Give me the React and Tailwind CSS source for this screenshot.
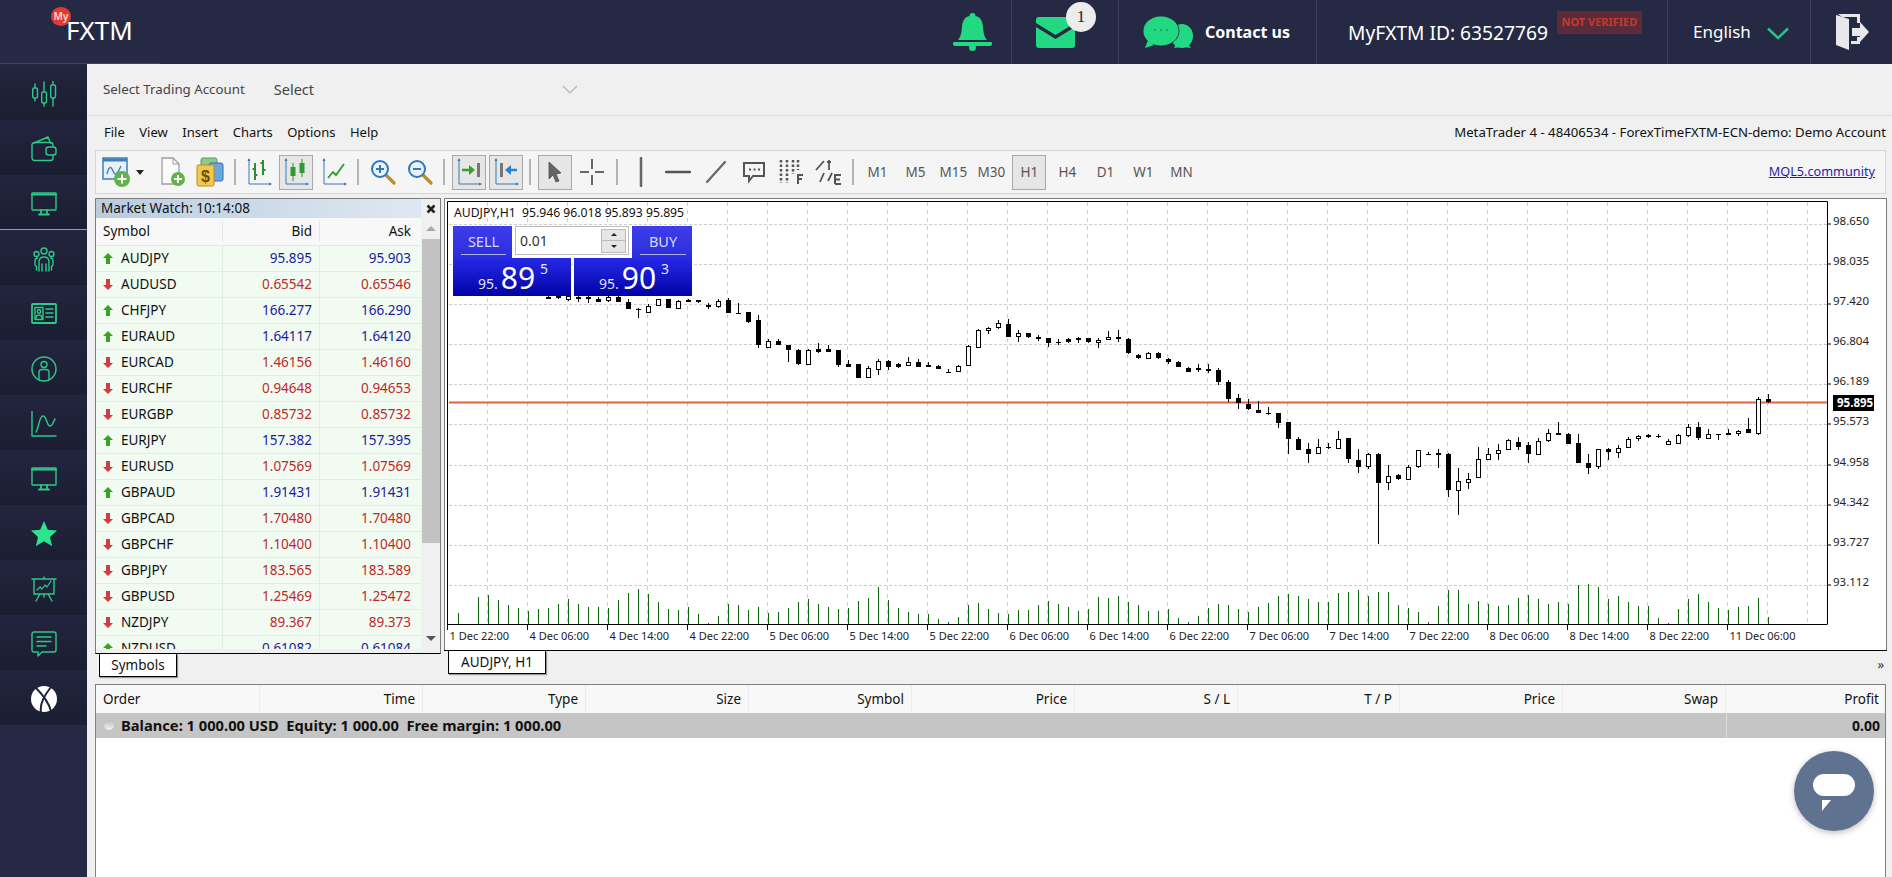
const quotes = [
  ['AUDJPY', '95.895', '95.903', 1],
  ['AUDUSD', '0.65542', '0.65546', 0],
  ['CHFJPY', '166.277', '166.290', 1],
  ['EURAUD', '1.64117', '1.64120', 1],
  ['EURCAD', '1.46156', '1.46160', 0],
  ['EURCHF', '0.94648', '0.94653', 0],
  ['EURGBP', '0.85732', '0.85732', 0],
  ['EURJPY', '157.382', '157.395', 1],
  ['EURUSD', '1.07569', '1.07569', 0],
  ['GBPAUD', '1.91431', '1.91431', 1],
  ['GBPCAD', '1.70480', '1.70480', 0],
  ['GBPCHF', '1.10400', '1.10400', 0],
  ['GBPJPY', '183.565', '183.589', 0],
  ['GBPUSD', '1.25469', '1.25472', 0],
  ['NZDJPY', '89.367', '89.373', 0],
  ['NZDUSD', '0.61082', '0.61084', 1],
]

const columns = ['Order', 'Time', 'Type', 'Size', 'Symbol', 'Price', 'S / L', 'T / P', 'Price', 'Swap', 'Profit']
const periods = ['M1', 'M5', 'M15', 'M30', 'H1', 'H4', 'D1', 'W1', 'MN']

// [index, wick top, wick bottom, body top, body bottom, hollow] y values are relative, see py()
const candles = [
  [10, 60, 85, 80, 84, 0], [11, 60, 88, 78, 84, 0], [12, 60, 92, 78, 88, 1], [13, 60, 97, 80, 85, 0],
  [14, 70, 100, 80, 88, 0], [15, 80, 95, 88, 95, 0], [16, 75, 95, 82, 90, 1], [17, 75, 95, 80, 95, 0],
  [18, 88, 117, 95, 117, 0], [19, 115, 145, 117, 117, 0], [20, 103, 128, 107, 125, 1], [21, 86, 106, 88, 104, 1],
  [22, 86, 113, 88, 113, 0], [23, 90, 114, 92, 113, 1], [24, 87, 97, 90, 95, 0], [25, 90, 100, 90, 97, 0],
  [26, 100, 118, 105, 108, 0], [27, 88, 115, 92, 109, 1], [28, 85, 130, 90, 128, 0], [29, 100, 130, 128, 128, 0],
  [30, 127, 158, 127, 155, 0], [31, 135, 235, 150, 224, 0], [32, 208, 233, 212, 230, 1], [33, 208, 226, 212, 224, 0],
  [34, 224, 275, 224, 240, 0], [35, 238, 285, 240, 282, 0], [36, 238, 283, 240, 281, 1], [37, 220, 248, 237, 245, 0],
  [38, 225, 245, 238, 245, 0], [39, 240, 292, 240, 285, 0], [40, 270, 292, 283, 290, 0], [41, 281, 323, 283, 323, 0],
  [42, 287, 322, 293, 322, 1], [43, 268, 315, 272, 296, 1], [44, 270, 300, 272, 290, 0], [45, 280, 293, 283, 290, 0],
  [46, 260, 285, 277, 284, 1], [47, 267, 291, 277, 290, 0], [48, 275, 290, 286, 289, 0], [49, 285, 298, 287, 297, 0],
  [50, 298, 308, 306, 306, 0], [51, 285, 307, 288, 304, 1], [52, 226, 286, 227, 284, 1], [53, 178, 235, 181, 230, 1],
  [54, 172, 192, 173, 178, 1], [55, 150, 178, 160, 170, 1], [56, 148, 201, 162, 200, 0], [57, 180, 215, 190, 199, 1],
  [58, 190, 205, 190, 200, 0], [59, 195, 212, 202, 205, 0], [60, 205, 230, 205, 218, 0], [61, 208, 224, 216, 216, 0],
  [62, 205, 218, 208, 215, 0], [63, 200, 220, 205, 208, 0], [64, 203, 219, 205, 217, 0], [65, 205, 233, 209, 217, 1],
  [66, 182, 210, 202, 208, 1], [67, 180, 216, 202, 206, 0], [68, 205, 252, 208, 250, 0], [69, 252, 268, 255, 265, 0],
  [70, 245, 266, 248, 264, 1], [71, 245, 267, 250, 265, 0], [72, 265, 282, 268, 275, 0], [73, 273, 291, 275, 290, 0],
  [74, 292, 306, 294, 305, 0], [75, 282, 306, 295, 299, 0], [76, 283, 310, 298, 304, 0], [77, 295, 345, 300, 335, 0],
  [78, 330, 395, 337, 386, 0], [79, 372, 417, 385, 400, 0], [80, 388, 420, 403, 418, 0], [81, 392, 430, 421, 428, 0],
  [82, 410, 435, 428, 428, 0], [83, 428, 473, 428, 458, 0], [84, 456, 552, 456, 506, 0], [85, 502, 540, 508, 539, 0],
  [86, 520, 578, 538, 551, 0], [87, 507, 552, 532, 550, 1], [88, 520, 538, 532, 532, 0], [89, 482, 536, 506, 535, 1],
  [90, 505, 580, 505, 568, 0], [91, 537, 608, 570, 590, 0], [92, 548, 596, 553, 589, 1], [93, 550, 822, 552, 638, 0],
  [94, 585, 660, 618, 635, 1], [95, 612, 630, 616, 626, 0], [96, 585, 630, 592, 626, 1], [97, 539, 593, 541, 589, 1],
  [98, 545, 555, 552, 552, 0], [99, 537, 595, 550, 553, 0], [100, 550, 680, 552, 660, 0], [101, 595, 735, 632, 659, 1],
  [102, 610, 657, 626, 635, 1], [103, 530, 624, 566, 622, 1], [104, 535, 568, 553, 566, 1], [105, 522, 570, 539, 550, 1],
  [106, 507, 538, 511, 536, 1], [107, 502, 540, 517, 530, 0], [108, 515, 578, 525, 551, 0], [109, 503, 552, 512, 551, 1],
  [110, 478, 515, 490, 509, 1], [111, 456, 495, 490, 494, 0], [112, 490, 522, 492, 521, 0], [113, 492, 580, 520, 578, 0],
  [114, 553, 612, 580, 594, 0], [115, 536, 598, 538, 588, 1], [116, 535, 570, 538, 545, 0], [117, 525, 563, 533, 545, 1],
  [118, 502, 533, 508, 532, 1], [119, 494, 514, 497, 505, 1], [120, 492, 503, 495, 500, 0], [121, 492, 505, 499, 499, 0],
  [122, 508, 524, 512, 523, 1], [123, 492, 522, 496, 520, 1], [124, 462, 500, 472, 495, 1], [125, 456, 509, 472, 505, 0],
  [126, 478, 505, 493, 503, 1], [127, 492, 510, 493, 493, 0], [128, 478, 495, 489, 493, 0], [129, 480, 498, 482, 490, 1],
  [130, 445, 490, 478, 488, 0], [131, 382, 494, 388, 488, 1], [132, 372, 398, 388, 397, 0],
]

const volumes = [
  1028, 1063, 980, 975, 990, 1005, 1014, 1022, 1018, 1014, 1002, 987, 1002, 1010, 1010, 1014, 990, 969, 957, 973,
  995, 1017, 1019, 1011, 1031, 1058, 1037, 1003, 1005, 1020, 1010, 1030, 1025, 1014, 997, 987, 1002, 1010, 1017, 1014,
  993, 983, 950, 990, 1014, 1026, 1032, 1032, 1046, 1056, 1041, 1005, 998, 1017, 1029, 1032, 1021, 1021, 1005, 993,
  1002, 1010, 1022, 1016, 980, 984, 978, 995, 1005, 1022, 1022, 1018, 1043, 1056, 1038, 1014, 1002, 1005, 1017, 1026,
  1010, 998, 978, 971, 978, 987, 996, 996, 968, 966, 960, 978, 966, 966, 1005, 1014, 1026, 1056, 1008, 960,
  960, 1002, 993, 1002, 1008, 1005, 984, 975, 987, 1002, 996, 1002, 945, 942, 950, 986, 978, 996, 1008, 1009,
  1044, 1058, 1017, 988, 971, 996, 1014, 1020, 1010, 1008, 984, 1042,
]

const priceLabels = [
  ['98.650', 224], ['98.035', 264], ['97.420', 304], ['96.804', 344], ['96.189', 384],
  ['95.573', 424], ['94.958', 465], ['94.342', 505], ['93.727', 545], ['93.112', 585],
]

const timeLabels = [
  '1 Dec 22:00', '4 Dec 06:00', '4 Dec 14:00', '4 Dec 22:00', '5 Dec 06:00', '5 Dec 14:00', '5 Dec 22:00',
  '6 Dec 06:00', '6 Dec 14:00', '6 Dec 22:00', '7 Dec 06:00', '7 Dec 14:00', '7 Dec 22:00', '8 Dec 06:00',
  '8 Dec 14:00', '8 Dec 22:00', '11 Dec 06:00',
]

const py = (z) => Math.round(270 + z / 3)

function NavIcon({ children }) {
  return (
    <svg width="26" height="26" viewBox="0 0 26 26" fill="none" stroke="#2cc988" strokeWidth="1.4" strokeLinecap="round" strokeLinejoin="round">
      {children}
    </svg>
  )
}

const navIcons = [
  <NavIcon key="a">
    <path d="M4 3v17M13 1v24M22 0v25" />
    <rect x="1.700" y="7" width="4.800" height="10" rx="1.500" fill="#1f2139" />
    <rect x="10.700" y="11" width="4.800" height="11" rx="1.500" fill="#1f2139" />
    <rect x="19.700" y="4" width="4.800" height="13" rx="1.500" fill="#1f2139" />
  </NavIcon>,
  <NavIcon key="b">
    <path d="M3 7l14-6 2.500 6" />
    <path d="M22 11V9a2.500 2.500 0 0 0-2.500-2.500H3.500A2.500 2.500 0 0 0 1 9v13a2.500 2.500 0 0 0 2.500 2.500H19.500A2.500 2.500 0 0 0 22 22v-3" />
    <rect x="15" y="11" width="10" height="8" rx="2.500" />
  </NavIcon>,
  <NavIcon key="c">
    <rect x="1" y="2" width="24" height="17" rx="0.500" />
    <path d="M1 3.500h24M10 19v3M16 19v3M8 23.500h10" strokeWidth="1.800" />
  </NavIcon>,
  <NavIcon key="d">
    <circle cx="13" cy="5" r="3" />
    <circle cx="5.500" cy="8" r="2.500" />
    <circle cx="20.500" cy="8" r="2.500" />
    <path d="M8 25v-9c0-3.500 2-5 5-5s5 1.500 5 5v9M11 25v-7M15 25v-7" />
    <path d="M5.500 24v-3.500L4 19v-4c0-2 1-3 2.500-3M20.500 24v-3.500L22 19v-4c0-2-1-3-2.500-3" />
  </NavIcon>,
  <NavIcon key="e">
    <rect x="1" y="3" width="24" height="19" rx="1" strokeWidth="1.800" />
    <rect x="4" y="6.500" width="8" height="12" />
    <circle cx="8" cy="10.500" r="1.700" />
    <path d="M5 18c0-3 1-4 3-4s3 1 3 4M15 8h7M15 12h7M15 16h7" />
  </NavIcon>,
  <NavIcon key="f">
    <circle cx="13" cy="13" r="12" />
    <circle cx="13" cy="8.500" r="3" />
    <path d="M8 24v-7.500c0-2 1.500-3 3-3h4c1.500 0 3 1 3 3V24" />
  </NavIcon>,
  <NavIcon key="g">
    <path d="M1 0v25h24" />
    <path d="M5 21c3-4 3-16 7-16s3.500 10 7 10c2.500 0 3-4 5-7" />
  </NavIcon>,
  <NavIcon key="h">
    <rect x="1" y="2" width="24" height="17" rx="0.500" />
    <path d="M1 3.500h24M10 19v3M16 19v3M8 23.500h10" strokeWidth="1.800" />
  </NavIcon>,
  <svg key="i" width="26" height="26" viewBox="0 0 26 26" fill="#2de38c">
    <path d="M13 0l3.800 8.700 9.200.9-7 6.300 2.100 9.300L13 20.300 4.900 25.200 7 15.900 0 9.600l9.200-.9z" />
  </svg>,
  <NavIcon key="j">
    <path d="M1 3h24M13 1v2M3 3v15h20V3M9 18l-4 7M17 18l4 7M13 18v3" />
    <path d="M6 14l3-3 2 2 3-4 2 2 4-6" strokeWidth="1.200" />
  </NavIcon>,
  <NavIcon key="k">
    <path d="M3 1h20a2 2 0 0 1 2 2v16a2 2 0 0 1-2 2H11l-4 4v-4H3a2 2 0 0 1-2-2V3a2 2 0 0 1 2-2z" />
    <path d="M6 6h14M6 10.500h14M6 15h9" />
  </NavIcon>,
  <svg key="l" width="26" height="26" viewBox="0 0 26 26">
    <circle cx="13" cy="13" r="13" fill="#fff" />
    <path d="M5 2c5 5 12 12 15 23M20 1C16 6 8 16 10 26" fill="none" stroke="#1f2139" strokeWidth="2" />
  </svg>,
]

function Axes({ children }) {
  return (
    <svg width="28" height="30" viewBox="0 0 28 30" fill="none">
      <path d="M4 2v25h22" stroke="#3679b5" strokeWidth="1" />
      <path d="M2.500 4L4 1l1.500 3zM24 25.500l3 1.500-3 1.500z" fill="#3679b5" />
      {children}
    </svg>
  )
}

function ToolIcon({ name }) {
  if (name === 'bars') {
    return (
      <Axes>
        <path d="M10 6v17M18 3v15M7.500 12H10M10 18h2.500M15.500 6H18M18 13h2.500" stroke="#2f8f2f" strokeWidth="2" />
      </Axes>
    )
  }
  if (name === 'candles') {
    return (
      <Axes>
        <path d="M11 6v18M20 2v18" stroke="#2f8f2f" strokeWidth="1" />
        <rect x="8.500" y="10" width="5" height="9" fill="#2f9a2f" />
        <rect x="17.500" y="6" width="5" height="10" fill="#2f9a2f" />
      </Axes>
    )
  }
  if (name === 'line') {
    return (
      <Axes>
        <path d="M8 21l5-6 3 3 8-11" stroke="#2f9a2f" strokeWidth="1.800" />
      </Axes>
    )
  }
  if (name === 'shiftEnd') {
    return (
      <Axes>
        <path d="M7 13h10" stroke="#35a02e" strokeWidth="2.500" />
        <path d="M14 8l6 5-6 5z" fill="#35a02e" />
        <rect x="22" y="6" width="3" height="14" fill="#777" />
      </Axes>
    )
  }
  if (name === 'autoScroll') {
    return (
      <Axes>
        <rect x="8" y="6" width="3" height="14" fill="#777" />
        <path d="M16 13h9" stroke="#2e7fd0" strokeWidth="2.500" />
        <path d="M19 8l-6 5 6 5z" fill="#2e7fd0" />
      </Axes>
    )
  }
  if (name === 'zoomIn' || name === 'zoomOut') {
    return (
      <svg width="26" height="26" viewBox="0 0 26 26" fill="none">
        <path d="M16 16l8 8" stroke="#c08a2d" strokeWidth="3.200" strokeLinecap="round" />
        <circle cx="10" cy="10" r="8" fill="#eaf3fb" stroke="#2c79bd" strokeWidth="2" />
        <path d={name === 'zoomIn' ? 'M6 10h8M10 6v8' : 'M6 10h8'} stroke="#2c79bd" strokeWidth="2" />
      </svg>
    )
  }
  if (name === 'cursor') {
    return (
      <svg width="20" height="24" viewBox="0 0 20 24" fill="#666" stroke="#444" strokeWidth="0.700">
        <path d="M4 2l12 11-5 1 3 7-3 1-3-7-4 4z" />
      </svg>
    )
  }
  if (name === 'cross') {
    return (
      <svg width="26" height="28" viewBox="0 0 26 28" stroke="#666" strokeWidth="2">
        <path d="M13 1v10M13 17v10M1 14h9M16 14h9" />
      </svg>
    )
  }
  if (name === 'vline') {
    return (
      <svg width="6" height="30" viewBox="0 0 6 30" stroke="#666" strokeWidth="2.500">
        <path d="M3 1v28" strokeLinecap="round" />
      </svg>
    )
  }
  if (name === 'hline') {
    return (
      <svg width="26" height="6" viewBox="0 0 26 6" stroke="#555" strokeWidth="2.500">
        <path d="M1 3h24" strokeLinecap="round" />
      </svg>
    )
  }
  if (name === 'trend') {
    return (
      <svg width="22" height="24" viewBox="0 0 22 24" stroke="#666" strokeWidth="2.200">
        <path d="M2 22L20 2" strokeLinecap="round" />
      </svg>
    )
  }
  if (name === 'text') {
    return (
      <svg width="24" height="24" viewBox="0 0 24 24" fill="none" stroke="#555" strokeWidth="2">
        <path d="M2 3h20v13H11l-4 5v-5H2z" />
        <path d="M7 9.500h2M11.500 9.500h2M16 9.500h2" strokeWidth="2.200" />
      </svg>
    )
  }
  if (name === 'fibo') {
    return (
      <svg width="26" height="28" viewBox="0 0 26 28" fill="none" stroke="#555">
        <path d="M3 2v23M9 2v23M15 2v14M20 2v10" strokeWidth="2.500" strokeDasharray="2.500 2" />
        <path d="M20 26v-9h5M20 21h4" strokeWidth="2" />
      </svg>
    )
  }
  if (name === 'elliott') {
    return (
      <svg width="28" height="28" viewBox="0 0 28 28" fill="none" stroke="#555" strokeWidth="1.800">
        <path d="M1 12l8-9M14 2v10M12 4h4M5 24l4-9M13 23l4-8" />
        <path d="M20 26V17h6M20 21.500h5M20 26h6" strokeWidth="2" />
      </svg>
    )
  }
  return null
}

function ToolButton({ name, active }) {
  return (
    <div className="flex h-[44px] w-[37.600px] items-center justify-center">
      <div className={`flex h-[35px] w-[34px] items-center justify-center ${active ? 'border border-[#a9a9a9] bg-[#e6e6e6]' : ''}`}>
        <ToolIcon name={name} />
      </div>
    </div>
  )
}

function ToolSep() {
  return (
    <div className="flex h-[44px] w-[10.900px] items-center justify-center">
      <div className="h-[26px] w-[2px] bg-[#b4b4b4]" />
    </div>
  )
}

function Toolbar() {
  return (
    <div className="mr-[6px] ml-[8px] flex h-[44px] shrink-0 items-center border border-[#d6d6d6] bg-[#f5f5f5] text-[#555]">
      <div className="flex w-[58px] items-center pl-[6px]">
        <svg width="30" height="32" viewBox="0 0 30 32" fill="none">
          <rect x="1" y="2" width="24" height="21" fill="#e8f1fa" stroke="#3b7fc0" strokeWidth="1.500" />
          <path d="M1 4h24" stroke="#3b7fc0" strokeWidth="3" />
          <path d="M5 18c2-8 4-8 6-3s4 4 8-5" stroke="#4c86bd" strokeWidth="1.500" />
          <circle cx="20" cy="23" r="8" fill="#5fb347" />
          <path d="M15.500 23h9M20 18.500v9" stroke="#fff" strokeWidth="2" />
        </svg>
        <span className="ml-[4px] h-0 w-0 border-x-[4.500px] border-t-[5px] border-x-transparent border-t-[#222]" />
      </div>
      <div className="flex w-[37.600px] justify-center">
        <svg width="26" height="30" viewBox="0 0 26 30" fill="none">
          <path d="M2 1h11l6 6v20H2z" fill="#fbfbfb" stroke="#9d9d9d" strokeWidth="1.300" />
          <path d="M13 1v6h6" stroke="#9d9d9d" />
          <circle cx="18" cy="22" r="7" fill="#5fb347" />
          <path d="M14 22h8M18 18v8" stroke="#fff" strokeWidth="2" />
        </svg>
      </div>
      <div className="flex h-[44px] w-[37.600px] items-center justify-center">
        <svg width="28" height="30" viewBox="0 0 28 30">
          <rect x="5" y="1" width="16" height="18" rx="2" fill="#8cc98a" stroke="#5f9a5d" />
          <rect x="13" y="6" width="14" height="18" rx="2" fill="#6ba7dc" stroke="#2f74b6" />
          <rect x="1" y="8" width="17" height="21" rx="1.500" fill="#f2c94a" stroke="#b78e1c" />
          <text x="5" y="25" fontSize="16" fontWeight="700" fill="#6b4d07" fontFamily="Liberation Sans">$</text>
        </svg>
      </div>
      <ToolSep />
      <ToolButton name="bars" />
      <ToolButton name="candles" active />
      <ToolButton name="line" />
      <ToolSep />
      <ToolButton name="zoomIn" />
      <ToolButton name="zoomOut" />
      <ToolSep />
      <ToolButton name="shiftEnd" active />
      <ToolButton name="autoScroll" active />
      <ToolSep />
      <ToolButton name="cursor" active />
      <ToolButton name="cross" />
      <ToolSep />
      <ToolButton name="vline" />
      <ToolButton name="hline" />
      <ToolButton name="trend" />
      <ToolButton name="text" />
      <ToolButton name="fibo" />
      <ToolButton name="elliott" />
      <ToolSep />
      {periods.map((period) => (
        <div key={period} className="flex h-[44px] w-[38px] items-center justify-center">
          <span className={`flex h-[35px] w-[34px] items-center justify-center text-[13.5px] ${period === 'H1' ? 'border border-[#a9a9a9] bg-[#e6e6e6]' : ''}`}>{period}</span>
        </div>
      ))}
      <a className="mr-[10px] ml-auto text-[12.7px] text-[#1f1fa8] underline">MQL5.community</a>
    </div>
  )
}

function TrendArrow({ up }) {
  return (
    <svg width="10" height="11" viewBox="0 0 10 11" fill={up ? '#37a41f' : '#d8393b'}>
      <path d={up ? 'M5 0l5 5H7v6H3V5H0z' : 'M3 0h4v6h3l-5 5-5-5h3z'} />
    </svg>
  )
}

function MarketWatch() {
  return (
    <div className="flex h-[456px] w-[346px] border-x border-t border-b border-[#7c7c7c] border-b-black bg-[#f0f0f0]">
      <div className="h-[450px] w-[325px] overflow-hidden">
        <div className="flex h-[19px] items-center bg-linear-to-r from-[#b9cde0] to-[#dfe8f1] pl-[5px] text-[13.5px] text-[#111]">Market Watch: 10:14:08</div>
        <div className="grid h-[28px] grid-cols-[126px_97px_100px] items-center border-b border-[#e8e8e8] bg-[#f8f8f8] text-[13.5px] text-[#111]">
          <span className="pl-[7px]">Symbol</span>
          <span className="border-l border-[#e6e6e6] pr-[7px] text-right">Bid</span>
          <span className="border-l border-[#e6e6e6] pr-[8px] text-right">Ask</span>
        </div>
        {quotes.map(([symbol, bid, ask, up]) => (
          <div key={symbol} className="grid h-[26px] grid-cols-[126px_97px_100px] items-center border-b border-[#e3eee3] bg-[#f2fbf2] text-[13.5px]">
            <span className="flex items-center pl-[7px] text-[#111]">
              <TrendArrow up={up} />
              <span className="ml-[8px]">{symbol}</span>
            </span>
            <span className={`flex h-full items-center justify-end border-l border-[#e3eee3] pr-[7px] ${up ? 'text-[#1c1c9c]' : 'text-[#bb2a2a]'}`}>{bid}</span>
            <span className={`flex h-full items-center justify-end border-l border-[#e3eee3] pr-[8px] ${up ? 'text-[#1c1c9c]' : 'text-[#bb2a2a]'}`}>{ask}</span>
          </div>
        ))}
      </div>
      <div className="flex flex-1 flex-col items-center">
        <div className="flex h-[19px] items-center">
          <svg width="10" height="10" viewBox="0 0 10 10" stroke="#222" strokeWidth="2.500">
            <path d="M1.500 1.500l7 7M8.500 1.500l-7 7" />
          </svg>
        </div>
        <div className="flex h-[21px] items-center">
          <span className="h-0 w-0 border-x-[5px] border-b-[5px] border-x-transparent border-b-[#a8a8a8]" />
        </div>
        <div className="h-[304px] w-[18px] bg-[#c2c2c2]" />
        <div className="flex flex-1 items-end pb-[12px]">
          <span className="h-0 w-0 border-x-[5px] border-t-[5px] border-x-transparent border-t-[#555]" />
        </div>
      </div>
    </div>
  )
}

function Chart() {
  const hLines = [224, 264, 304, 344, 384, 424, 465, 505, 545, 585]
  const vLines = Array.from({ length: 34 }, (_, k) => 487.5 + 40 * k)
  return (
    <svg className="block h-[451px] w-[1441px]" viewBox="445 199 1441 451" fontFamily="Noto Sans">
      <rect x="445" y="199" width="1441" height="451" fill="#fff" />
      {hLines.map((y) => (
        <line key={y} x1="449" x2="1827" y1={y + 0.5} y2={y + 0.5} stroke="#cdcdcd" strokeDasharray="3 2" />
      ))}
      {vLines.map((x) => (
        <line key={x} x1={x} x2={x} y1="202" y2="624" stroke="#cdcdcd" strokeDasharray="4 4" />
      ))}
      <line x1="449" x2="1827" y1="402.500" y2="402.500" stroke="#e4603f" strokeWidth="2" />
      {volumes.map((top, idx) => {
        const x = 448.5 + 10 * (idx + 1)
        return <line key={idx} x1={x} x2={x} y1={py(top)} y2="624" stroke="#0c640c" />
      })}
      {candles.map(([i, wt, wb, bt, bb, hollow]) => {
        const x = 448.5 + 10 * i
        return (
          <g key={i} shapeRendering="crispEdges">
            <line x1={x} x2={x} y1={py(wt)} y2={py(wb)} stroke="#000" />
            {bt === bb ? (
              <line x1={x - 2.5} x2={x + 2.5} y1={py(bt) + 0.5} y2={py(bt) + 0.5} stroke="#000" />
            ) : hollow ? (
              <rect x={x - 2} y={py(bt) + 0.5} width="4" height={Math.max(py(bb) - py(bt), 2)} fill="#fff" stroke="#000" />
            ) : (
              <rect x={x - 2.5} y={py(bt)} width="5" height={Math.max(py(bb) - py(bt), 2)} fill="#000" />
            )}
          </g>
        )
      })}
      <path d="M447.500 624V201.500H1827.500V624" fill="none" stroke="#000" />
      <path d="M447.500 624.500H1827.500" stroke="#000" />
      <text x="454" y="217" fontSize="12.200" fill="#111" xmlSpace="preserve">AUDJPY,H1  95.946 96.018 95.893 95.895</text>
      {priceLabels.map(([label, y]) => (
        <g key={label}>
          <line x1="1828" x2="1831" y1={y} y2={y} stroke="#000" />
          <text x="1833" y={y + 1} fontSize="11.500" fill="#222">{label}</text>
        </g>
      ))}
      {timeLabels.map((label, k) => {
        const x = 447.5 + 80 * k
        return (
          <g key={label}>
            <line x1={x} x2={x} y1="624" y2="630" stroke="#000" />
            <text x={x + 2} y="640" fontSize="11" fill="#222">{label}</text>
          </g>
        )
      })}
      <rect x="1833" y="395" width="41" height="16" fill="#000" />
      <text x="1837" y="407" fontSize="11.500" fontWeight="700" fill="#fff">95.895</text>
    </svg>
  )
}

function PriceBox({ small, big, tail }) {
  return (
    <div className="flex w-[118px] justify-center bg-linear-to-b from-[#2727e6] to-[#0000a6] pt-[1px] pl-[2px] text-white">
      <span className="mt-[15px] text-[14px] leading-[20px] text-[#dfe3ff]">{small}</span>
      <span className="ml-[3px] text-[30px] leading-[38px]">{big}</span>
      <span className="mt-[1px] ml-[5px] text-[14px] leading-[18px] text-[#dfe3ff]">{tail}</span>
    </div>
  )
}

function TradePanel() {
  return (
    <div className="absolute top-[27px] left-[8px] w-[240px]">
      <div className="flex h-[32px]">
        <div className="w-[59px] bg-linear-to-b from-[#3d3deb] to-[#2c2cdc] pt-[5px] pr-[6px] pl-[8px] text-center text-[14.5px] leading-[20px] text-[#d5dbff]">
          <div className="border-b border-[#aab2f5] pb-[3px]">SELL</div>
        </div>
        <div className="flex w-[120px] bg-white px-[3px] pb-[3px]">
          <div className="flex flex-1 items-center justify-between border border-[#bdbdbd] pr-[2px] pl-[4px] text-[14px] text-[#333]">
            0.01
            <div className="flex h-[24px] w-[25px] flex-col border border-[#bbb] bg-[#e6e6e6]">
              <span className="flex flex-1 items-center justify-center border-b border-[#bbb]"><span className="h-0 w-0 border-x-[3px] border-b-[3px] border-x-transparent border-b-[#222]" /></span>
              <span className="flex flex-1 items-center justify-center"><span className="h-0 w-0 border-x-[3px] border-t-[3px] border-x-transparent border-t-[#222]" /></span>
            </div>
          </div>
        </div>
        <div className="w-[60px] bg-linear-to-b from-[#3d3deb] to-[#2c2cdc] pt-[5px] pr-[6px] pl-[8px] text-center text-[14.5px] leading-[20px] text-[#d5dbff]">
          <div className="border-b border-[#aab2f5] pb-[3px]">BUY</div>
        </div>
      </div>
      <div className="flex h-[38px] gap-[3px]">
        <PriceBox small="95." big="89" tail="5" />
        <PriceBox small="95." big="90" tail="3" />
      </div>
    </div>
  )
}

function Terminal() {
  return (
    <div className="mr-[6px] ml-[8px] flex-1 border-x border-t border-[#808080] bg-white text-[13.5px] text-[#111]">
      <div className="grid h-[28px] grid-cols-[164px_163px_163px_163px_163px_163px_163px_162px_163px_163px_1fr] items-center bg-[#f8f8f8]">
        {columns.map((col, idx) => (
          <span key={idx} className={`flex h-full items-center border-r border-[#ececec] ${idx === 0 ? 'pl-[7px]' : idx === 10 ? 'justify-end pr-[5px]' : 'justify-end pr-[7px]'}`}>{col}</span>
        ))}
      </div>
      <div className="grid h-[25px] grid-cols-[1630px_1fr] items-center bg-[#c5c5c5] text-[14.7px] font-bold">
        <span className="flex items-center pl-[8px] whitespace-pre">
          <span className="mr-[7px] h-[10px] w-[10px] rounded-full bg-linear-to-b from-[#bbb] to-[#f5f5f5]" />
          Balance: 1 000.00 USD  Equity: 1 000.00  Free margin: 1 000.00
        </span>
        <span className="flex h-full items-center justify-end border-l border-[#ddd] pr-[5px] text-[14px]">0.00</span>
      </div>
    </div>
  )
}

export default function App() {
  return (
    <div className="relative flex h-screen w-full flex-col overflow-hidden bg-[#f0f0f0] font-['Noto_Sans',sans-serif]">
      <header className="flex h-16 shrink-0 bg-[#252943] text-white">
        <div className="flex w-[160px] items-start border-b border-[#41455f] pt-[7px] pl-[51px]">
          <span className="flex h-[19px] w-[20px] items-center justify-center rounded-full bg-[#e0392f] text-[10px] font-bold text-[#f8c9c0]">My</span>
          <span className="mt-[5px] -ml-[5px] text-[26px] leading-[36px]">FXTM</span>
        </div>
        <div className="ml-auto flex h-full items-center pr-[19px]">
          <svg width="39" height="38" viewBox="0 0 39 38" fill="#22d883">
            <path d="M19.500 0a3 3 0 0 1 3 3c5 1 7 5 7.500 11 .5 7 2 11 4 13H5c2-2 3.500-6 4-13 .5-6 2.500-10 7.500-11a3 3 0 0 1 3-3z" />
            <path d="M1 29h37a1 1 0 0 1 1 1v1a2 2 0 0 1-2 2H2a2 2 0 0 1-2-2v-1a1 1 0 0 1 1-1z" />
            <circle cx="19.500" cy="34.500" r="3.500" />
          </svg>
        </div>
        <div className="relative flex w-[107px] items-center border-l border-[#3b3f5a] pl-[24px]">
          <svg width="39" height="31" viewBox="0 0 39 31" fill="#22d883">
            <path d="M3 0h33a3 3 0 0 1 3 3v3L19.500 18 0 6V3a3 3 0 0 1 3-3z" />
            <path d="M0 10l19.500 12L39 10v18a3 3 0 0 1-3 3H3a3 3 0 0 1-3-3z" />
          </svg>
          <span className="absolute top-[2px] left-[54px] flex h-[30px] w-[30px] items-center justify-center rounded-full bg-[#ececec] font-['Liberation_Serif',serif] text-[17px] text-[#222]">1</span>
        </div>
        <div className="flex w-[198px] items-center border-l border-[#3b3f5a] pl-[24px]">
          <svg width="50" height="33" viewBox="0 0 50 33" fill="#22d883">
            <ellipse cx="39" cy="20" rx="11" ry="12" />
            <path d="M33 28l-2 4 7-1zM45 28l3 4-7-1z" />
            <ellipse cx="18" cy="15" rx="18" ry="15" stroke="#252943" strokeWidth="0.800" />
            <path d="M5 24L2 32l9-3z" />
            <circle cx="12" cy="14" r="1" fill="#1a9a62" />
            <circle cx="18" cy="14" r="1" fill="#1a9a62" />
            <circle cx="24" cy="14" r="1" fill="#1a9a62" />
          </svg>
          <span className="ml-[12px] text-[16px] font-bold">Contact us</span>
        </div>
        <div className="flex w-[351px] items-center border-l border-[#3b3f5a] pl-[31px]">
          <span className="mt-[2px] text-[19.200px]">MyFXTM ID: 63527769</span>
          <span className="mb-[20px] ml-[9px] flex h-[23px] w-[85px] items-center justify-center bg-[#5a2c39] text-[11px] font-bold whitespace-nowrap text-[#c6392c]">NOT VERIFIED</span>
        </div>
        <div className="flex w-[143px] items-center border-l border-[#3b3f5a] pl-[25px]">
          <span className="text-[17px]">English</span>
          <svg className="mt-[2px] ml-[16px]" width="22" height="13" viewBox="0 0 22 13" fill="none" stroke="#1fc58a" strokeWidth="2.500">
            <path d="M1 1.500l10 9.500 10-9.500" />
          </svg>
        </div>
        <div className="flex w-[82px] items-center border-l border-[#3b3f5a] pl-[25px]">
          <svg width="33" height="36" viewBox="0 0 33 36" fill="#e8e8ec">
            <path d="M0 1l13 4v31L0 31z" />
            <path d="M2 0h22v9h-3V3H6zM15 30h9v-7h-3v4h-6z" />
            <path d="M16 14h8V8l9 10-9 10v-6h-8z" />
          </svg>
        </div>
      </header>

      <div className="flex min-h-0 flex-1">
        <aside className="w-[87px] shrink-0 bg-[#252943] pt-[1px]">
          {navIcons.map((icon, idx) => (
            <div key={idx} className={`flex h-[55px] items-center justify-center bg-linear-to-b from-[#23253f] to-[#1b1d32] pt-[3px] ${idx === 2 ? 'border-b border-[#35c9a0]' : ''}`}>
              {icon}
            </div>
          ))}
        </aside>

        <main className="flex min-w-0 flex-1 flex-col">
          <div className="relative flex h-[52px] shrink-0 items-center border-b border-[#dedede] pl-[16px] text-[#444]">
            <span className="text-[13.3px]">Select Trading Account</span>
            <span className="ml-[29px] text-[14.5px]">Select</span>
            <svg className="absolute top-[21px] left-[475px]" width="16" height="10" viewBox="0 0 16 10" fill="none" stroke="#bbb" strokeWidth="1.500">
              <path d="M1 1l7 7 7-7" />
            </svg>
          </div>
          <div className="flex h-[34px] shrink-0 items-center gap-[14.5px] pr-[6px] pl-[17px] text-[13px] text-[#111]">
            <span>File</span>
            <span>View</span>
            <span>Insert</span>
            <span>Charts</span>
            <span>Options</span>
            <span>Help</span>
            <span className="ml-auto text-[13.2px]">MetaTrader 4 - 48406534 - ForexTimeFXTM-ECN-demo: Demo Account</span>
          </div>
          <Toolbar />
          <div className="mt-[4px] mr-[6px] ml-[8px] flex h-[486px] shrink-0 gap-[3px]">
            <div className="flex flex-col">
              <MarketWatch />
              <div className="ml-[4px] flex h-[23px] w-[78px] items-center justify-center border-x border-b border-black bg-white text-[13.5px] text-[#111] shadow-[1px_1px_1px_#999]">Symbols</div>
            </div>
            <div className="flex flex-1 flex-col">
              <div className="relative h-[452px] border-x border-t border-[#7c7c7c] bg-white">
                <Chart />
                <TradePanel />
              </div>
              <div className="flex items-start border-t border-black">
                <div className="ml-[4px] flex h-[23px] w-[98px] items-center justify-center border-x border-b border-black bg-white text-[13.5px] text-[#111] shadow-[1px_1px_1px_#999]">AUDJPY, H1</div>
                <span className="mt-[4px] mr-[3px] ml-auto text-[13px] leading-[18px] text-[#333]">»</span>
              </div>
            </div>
          </div>
          <Terminal />
        </main>
      </div>

      <div className="absolute right-[18px] bottom-[46px] flex h-20 w-20 items-center justify-center rounded-full bg-[#5f7391] shadow-[0_2px_6px_rgba(0,0,0,0.25)]">
        <svg width="42" height="46" viewBox="0 0 42 46" fill="#fff">
          <rect x="0" y="6" width="42" height="22" rx="11" />
          <path d="M9 32h9l-9 11z" />
        </svg>
      </div>
    </div>
  )
}
